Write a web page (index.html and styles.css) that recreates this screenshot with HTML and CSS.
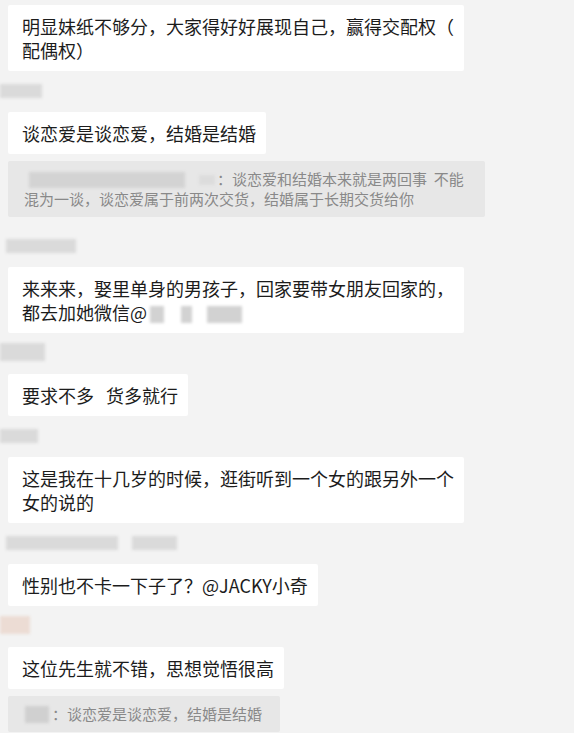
FILE: index.html
```html
<!DOCTYPE html>
<html lang="zh-CN">
<head>
    <meta charset="UTF-8">
    <meta name="viewport" content="width=device-width, initial-scale=1.0">
    <title>群聊</title>
    <link rel="stylesheet" href="styles.css">
</head>
<body>
    <div class="chat">
        <div class="msg first">
            <div class="bubble">明显妹纸不够分，大家得好好展现自己，赢得交配权（<br>配偶权）</div>
        </div>

        <div class="msg">
            <div class="name"><span class="blur w42"></span></div>
            <div class="bubble">谈恋爱是谈恋爱，结婚是结婚</div>
            <div class="quote">
                <span class="blur qname"></span><span class="blur qdot"></span>：谈恋爱和结婚本来就是两回事&nbsp; 不能<br>混为一谈，谈恋爱属于前两次交货，结婚属于长期交货给你
            </div>
        </div>

        <div class="msg">
            <div class="name indent"><span class="blur w70"></span></div>
            <div class="bubble">来来来，娶里单身的男孩子，回家要带女朋友回家的，<br>都去加她微信@<span class="blur at1"></span><span class="blur at2"></span><span class="blur at3"></span></div>
        </div>

        <div class="msg">
            <div class="name"><span class="blur w45 tall"></span></div>
            <div class="bubble">要求不多<span class="gap"></span>货多就行</div>
        </div>

        <div class="msg">
            <div class="name"><span class="blur w38"></span></div>
            <div class="bubble">这是我在十几岁的时候，逛街听到一个女的跟另外一个<br>女的说的</div>
        </div>

        <div class="msg">
            <div class="name indent"><span class="blur w112"></span><span class="blur w45"></span></div>
            <div class="bubble">性别也不卡一下子了？@JACKY小奇</div>
        </div>

        <div class="msg">
            <div class="name"><span class="blur w30 tall pink"></span></div>
            <div class="bubble">这位先生就不错，思想觉悟很高</div>
            <div class="quote short">
                <span class="blur qname2"></span>：谈恋爱是谈恋爱，结婚是结婚
            </div>
        </div>
    </div>
</body>
</html>
```

FILE: styles.css
```css
body {
    margin: 0;
    background-color: #f3f3f3;
    font-family: "Noto Sans CJK SC", "Noto Sans", sans-serif;
    overflow: hidden;
}
.chat {
    padding-top: 5px;
}
.msg {
    margin-top: 13px;
}
.msg.first {
    margin-top: 0;
}
.name {
    height: 14px;
    margin-bottom: 14px;
    display: flex;
    gap: 14px;
}
.name.indent {
    padding-left: 6px;
}
.blur {
    display: inline-block;
    background-color: #dadada;
    filter: blur(1.5px);
    height: 14px;
}
.blur.tall {
    height: 18px;
    margin-top: -3px;
}
.blur.pink {
    background-color: #ecdcd4;
}
.w30 { width: 30px; }
.w38 { width: 38px; }
.w42 { width: 42px; }
.w45 { width: 45px; }
.w70 { width: 70px; }
.w112 { width: 112px; }
.bubble {
    margin-left: 8px;
    width: fit-content;
    background-color: #fff;
    padding: 9px 10px 9px 14px;
    font-size: 18px;
    line-height: 24px;
    color: #1c1c1c;
    border-radius: 2px;
}
.gap {
    display: inline-block;
    width: 12px;
}
.at1, .at2, .at3 {
    height: 17px;
    vertical-align: -3px;
    background-color: #d2d2d2;
}
.at1 { width: 14px; margin-left: 3px; }
.at2 { width: 11px; margin-left: 17px; }
.at3 { width: 35px; margin-left: 15px; }
.quote {
    margin: 7px 0 22px 8px;
    width: 477px;
    box-sizing: border-box;
    background-color: #e7e7e7;
    padding: 8px 16px;
    font-size: 15px;
    line-height: 20px;
    color: #898989;
    border-radius: 2px;
}
.quote.short {
    width: 272px;
    margin-bottom: 0;
}
.qname {
    width: 156px;
    height: 16px;
    margin-left: 5px;
    vertical-align: -3px;
    background-color: #d3d3d3;
}
.qdot {
    width: 16px;
    height: 10px;
    margin-left: 14px;
    margin-right: 2px;
    background-color: #dcdcdc;
}
.qname2 {
    width: 24px;
    height: 17px;
    margin-left: 1px;
    margin-right: 3px;
    vertical-align: -3px;
    background-color: #d0d0d0;
}
```
